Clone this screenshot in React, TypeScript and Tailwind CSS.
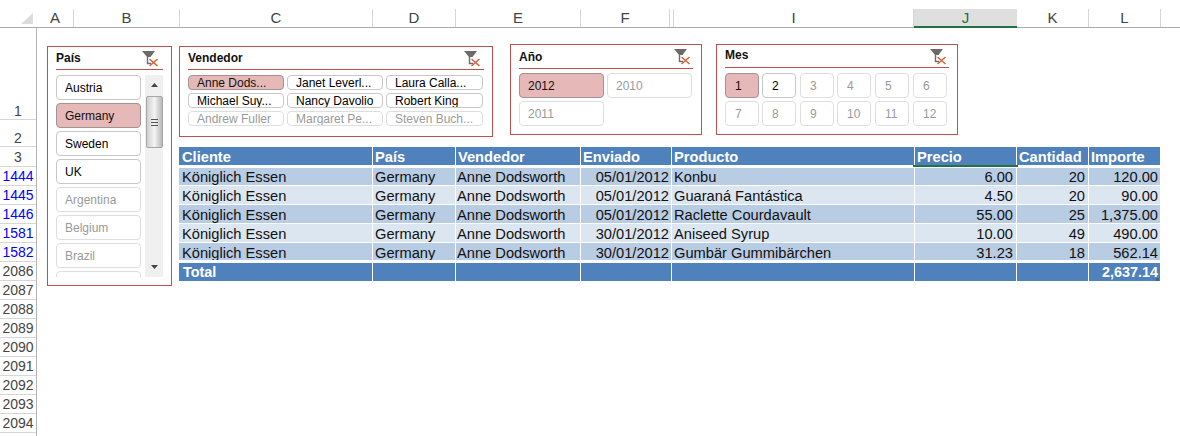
import React from "react";

const cols: [string, string, boolean?][] = [
  ["A", "w-[37px]"],
  ["B", "w-[106px]"],
  ["C", "w-[193px]"],
  ["D", "w-[83px]"],
  ["E", "w-[125px]"],
  ["F", "w-[89px]"],
  ["", "w-[4px]"],
  ["I", "w-[240px]"],
  ["J", "w-[103px]", true],
  ["K", "w-[72px]"],
  ["L", "w-[72px]"],
];

const rowHeads: [string, string][] = [
  ["1", "h-[92px] items-end text-[#444]"],
  ["2", "h-[27px] items-end text-[#444]"],
  ["3", "h-[20px] items-center text-[#444]"],
  ["1444", "h-[19px] items-center text-[#0000ff]"],
  ["1445", "h-[19px] items-center text-[#0000ff]"],
  ["1446", "h-[19px] items-center text-[#0000ff]"],
  ["1581", "h-[19px] items-center text-[#0000ff]"],
  ["1582", "h-[19px] items-center text-[#0000ff]"],
  ...["2086", "2087", "2088", "2089", "2090", "2091", "2092", "2093", "2094"].map(
    (n) => [n, "h-[19px] items-center text-[#444]"] as [string, string]
  ),
];

const tableCols = ["w-[194px]", "w-[83px]", "w-[125px]", "w-[91px]", "w-[243px]", "w-[102px]", "w-[72px]", "w-[72px]"];
const headers = ["Cliente", "País", "Vendedor", "Enviado", "Producto", "Precio", "Cantidad", "Importe"];
const rows: { cells: string[]; cls: string }[] = [
  { cells: ["Königlich Essen", "Germany", "Anne Dodsworth", "05/01/2012", "Konbu", "6.00", "20", "120.00"], cls: "h-[17px] leading-[18px] bg-[#b8cce4]" },
  { cells: ["Königlich Essen", "Germany", "Anne Dodsworth", "05/01/2012", "Guaraná Fantástica", "4.50", "20", "90.00"], cls: "h-[18px] leading-[20px] mt-px bg-[#dce6f1]" },
  { cells: ["Königlich Essen", "Germany", "Anne Dodsworth", "05/01/2012", "Raclette Courdavault", "55.00", "25", "1,375.00"], cls: "h-[18px] leading-[20px] mt-px bg-[#b8cce4]" },
  { cells: ["Königlich Essen", "Germany", "Anne Dodsworth", "30/01/2012", "Aniseed Syrup", "10.00", "49", "490.00"], cls: "h-[18px] leading-[20px] mt-px bg-[#dce6f1]" },
  { cells: ["Königlich Essen", "Germany", "Anne Dodsworth", "30/01/2012", "Gumbär Gummibärchen", "31.23", "18", "562.14"], cls: "h-[17px] leading-[20px] mt-px bg-[#b8cce4]" },
];

const bodyAlign = [
  "pl-[3px]",
  "pl-[2px]",
  "pl-[1px]",
  "text-right pr-[2px]",
  "pl-[2px]",
  "text-right pr-[3px]",
  "text-right pr-[3px]",
  "text-right pr-[2px]",
];

function FilterIcon() {
  return (
    <svg width="17" height="16" viewBox="0 0 17 16" className="shrink-0">
      <path d="M0 0H13L8.5 6H5Z" fill="#6f6a6a" />
      <path d="M5.5 6V12.5H9" fill="none" stroke="#6f6a6a" strokeWidth="1.4" />
      <path d="M7.5 8L15.5 15M15.5 8L7.5 15" stroke="#d2623f" strokeWidth="1.5" />
    </svg>
  );
}

type ItemState = "sel" | "on" | "off";
const itemCls: Record<ItemState, string> = {
  sel: "bg-[#e6b8b7] border-[#a39393] text-[#111]",
  on: "bg-white border-[#c8c8c8] text-black",
  off: "bg-white border-[#dedede] text-[#9a9a9a]",
};

function Item({ label, state, cls }: { label: string; state: ItemState; cls: string }) {
  return (
    <div className={`box-border flex items-center shrink-0 border rounded-[4px] text-[12px] whitespace-nowrap overflow-hidden ${itemCls[state]} ${cls}`}>
      {label}
    </div>
  );
}

function Head({ title, cls, iconCls }: { title: string; cls: string; iconCls: string }) {
  return (
    <div className={`flex justify-between border-b border-[#c0504d] ${cls}`}>
      <span className="font-bold text-[12px] leading-[14px] text-[#111]">{title}</span>
      <span className={iconCls}>
        <FilterIcon />
      </span>
    </div>
  );
}

export default function App() {
  return (
    <div className="w-[1180px] h-[436px] bg-white overflow-hidden font-['Liberation_Sans',Arial,sans-serif]">
      <div className="pt-[9px]">
        {/* Column headers */}
        <div className="flex h-[19px] border-b border-[#ababab]">
          <div className="w-[37px] h-[18px] shrink-0 flex items-end justify-end pr-[4px] pb-[3px]">
            <svg width="12" height="11" viewBox="0 0 12 11">
              <path d="M12 0V11H0Z" fill="#dcdcdc" />
            </svg>
          </div>
          {cols.map(([c, w, sel], i) => (
            <div
              key={i}
              className={`${w} shrink-0 box-border flex items-center justify-center text-[15px] leading-[18px] ${
                sel
                  ? "h-[19px] bg-[#dfdfdf] border-b-2 border-[#217346] text-[#217346]"
                  : "h-[18px] border-r border-[#d6d6d6] text-[#444]"
              }`}
            >
              {c}
            </div>
          ))}
        </div>

        <div className="flex">
          {/* Row headers */}
          <div className="w-[37px] h-[408px] shrink-0 border-r border-[#b4b4b4] box-border">
            {rowHeads.map(([n, cls]) => (
              <div key={n} className={`box-border flex justify-center border-b border-[#d6d6d6] text-[14px] leading-[18px] ${cls}`}>
                <span className={n === "1" || n === "2" ? "translate-y-[1px]" : ""}>{n}</span>
              </div>
            ))}
          </div>

          {/* Sheet */}
          <div className="flex items-start">
            {/* País slicer */}
            <div className="box-border ml-[10px] mt-[18px] w-[125px] h-[240px] border border-[#c0504d] px-[8px] bg-white">
              <Head title="País" cls="h-[23px] pt-[4px]" iconCls="mr-[4px]" />
              <div className="flex gap-[4px] mt-[5px] h-[202px]">
                <div className="flex flex-col gap-[3px] w-[85px] overflow-hidden">
                  {(
                    [
                      ["Austria", "on"],
                      ["Germany", "sel"],
                      ["Sweden", "on"],
                      ["UK", "on"],
                      ["Argentina", "off"],
                      ["Belgium", "off"],
                      ["Brazil", "off"],
                      ["", "off"],
                    ] as [string, ItemState][]
                  ).map(([l, s], i) => (
                    <Item key={i} label={l} state={s} cls="w-[85px] h-[25px] pl-[8px]" />
                  ))}
                </div>
                <div className="w-[18px] h-[202px] bg-[#f0f0f0] flex flex-col items-center">
                  <svg width="7" height="4" viewBox="0 0 7 4" className="mt-[8px]">
                    <path d="M3.5 0L7 4H0Z" fill="#444" />
                  </svg>
                  <div className="box-border w-[17px] h-[52px] mt-[9px] rounded-[2px] border border-[#a6a6a6] bg-linear-to-r from-[#cfcfcf] via-[#f4f4f4] to-[#b8b8b8] flex flex-col items-center justify-center gap-[2px]">
                    <div className="w-[7px] h-px bg-[#555]" />
                    <div className="w-[7px] h-px bg-[#555]" />
                    <div className="w-[7px] h-px bg-[#555]" />
                  </div>
                  <svg width="7" height="4" viewBox="0 0 7 4" className="mt-auto mb-[8px]">
                    <path d="M3.5 4L7 0H0Z" fill="#444" />
                  </svg>
                </div>
              </div>
            </div>

            <div className="ml-[7px] flex flex-col">
              <div className="flex items-start h-[119px]">
                {/* Vendedor */}
                <div className="box-border mt-[18px] w-[314px] h-[91px] border border-[#c0504d] px-[8px]">
                  <Head title="Vendedor" cls="h-[23px] pt-[4px]" iconCls="mr-[3px]" />
                  <div className="grid grid-cols-[96px_96px_97px] gap-x-[3px] gap-y-[3px] mt-[5px]">
                    {(
                      [
                        ["Anne Dods...", "sel"],
                        ["Janet Leverl...", "on"],
                        ["Laura Calla...", "on"],
                        ["Michael Suy...", "on"],
                        ["Nancy Davolio", "on"],
                        ["Robert King", "on"],
                        ["Andrew Fuller", "off"],
                        ["Margaret Pe...", "off"],
                        ["Steven Buch...", "off"],
                      ] as [string, ItemState][]
                    ).map(([l, s]) => (
                      <Item key={l} label={l} state={s} cls="h-[15px] pl-[8px]" />
                    ))}
                  </div>
                </div>

                {/* Año */}
                <div className="box-border ml-[17px] mt-[16px] w-[192px] h-[91px] border border-[#c0504d] px-[8px]">
                  <Head title="Año" cls="h-[24px] pt-[5px]" iconCls="-mt-px mr-[2px]" />
                  <div className="grid grid-cols-[repeat(2,85px)] gap-[3px] mt-[4px]">
                    {(
                      [
                        ["2012", "sel"],
                        ["2010", "off"],
                        ["2011", "off"],
                      ] as [string, ItemState][]
                    ).map(([l, s]) => (
                      <Item key={l} label={l} state={s} cls="h-[25px] pl-[8px]" />
                    ))}
                  </div>
                </div>

                {/* Mes */}
                <div className="box-border ml-[14px] mt-[16px] w-[242px] h-[91px] border border-[#c0504d] px-[8px]">
                  <Head title="Mes" cls="h-[23px] pt-[3px]" iconCls="mt-px mr-[2px]" />
                  <div className="grid grid-cols-[37px_38px_37px_38px_38px_34px] gap-y-[3px] mt-[5px]">
                    {(
                      [
                        ["1", "sel"],
                        ["2", "on"],
                        ["3", "off"],
                        ["4", "off"],
                        ["5", "off"],
                        ["6", "off"],
                        ["7", "off"],
                        ["8", "off"],
                        ["9", "off"],
                        ["10", "off"],
                        ["11", "off"],
                        ["12", "off"],
                      ] as [string, ItemState][]
                    ).map(([l, s]) => (
                      <Item key={l} label={l} state={s} cls="w-[34px] h-[25px] pl-[9px]" />
                    ))}
                  </div>
                </div>
              </div>

              {/* Table */}
              <div className="flex flex-col w-[982px] text-[14.67px]">
                <div className="flex h-[18px] bg-[#4f81bd] text-white font-bold leading-[20px]">
                  {headers.map((h, i) => (
                    <div key={h} className={`${tableCols[i]} box-border ${i === 0 ? "pl-[3px]" : "pl-[2px]"} border-r border-white relative`}>
                      {h}
                      {h === "Precio" && <div className="absolute left-[-2px] top-[18px] w-[105px] h-[2px] bg-[#217346]" />}
                    </div>
                  ))}
                </div>
                <div className="h-[3px]" />
                {rows.map((r, ri) => (
                  <div key={ri} className={`flex text-[#111] ${r.cls}`}>
                    {r.cells.map((c, i) => (
                      <div key={i} className={`${tableCols[i]} box-border border-r border-white whitespace-nowrap overflow-hidden ${bodyAlign[i]}`}>
                        {c}
                      </div>
                    ))}
                  </div>
                ))}
                <div className="flex h-[18px] mt-[3px] bg-[#4f81bd] text-white font-bold text-[14.4px] leading-[18px]">
                  {tableCols.map((w, i) => (
                    <div key={i} className={`${w} box-border border-r border-white ${i === 7 ? "text-right pr-[2px] relative" : "pl-[4px]"}`}>
                      {i === 0 ? "Total" : i === 7 ? "2,637.14" : ""}
                      {i === 7 && <div className="absolute right-[1px] bottom-0 w-[3px] h-[3px] bg-[#3a6596]" />}
                    </div>
                  ))}
                </div>
              </div>
            </div>
          </div>
        </div>
      </div>
    </div>
  );
}
